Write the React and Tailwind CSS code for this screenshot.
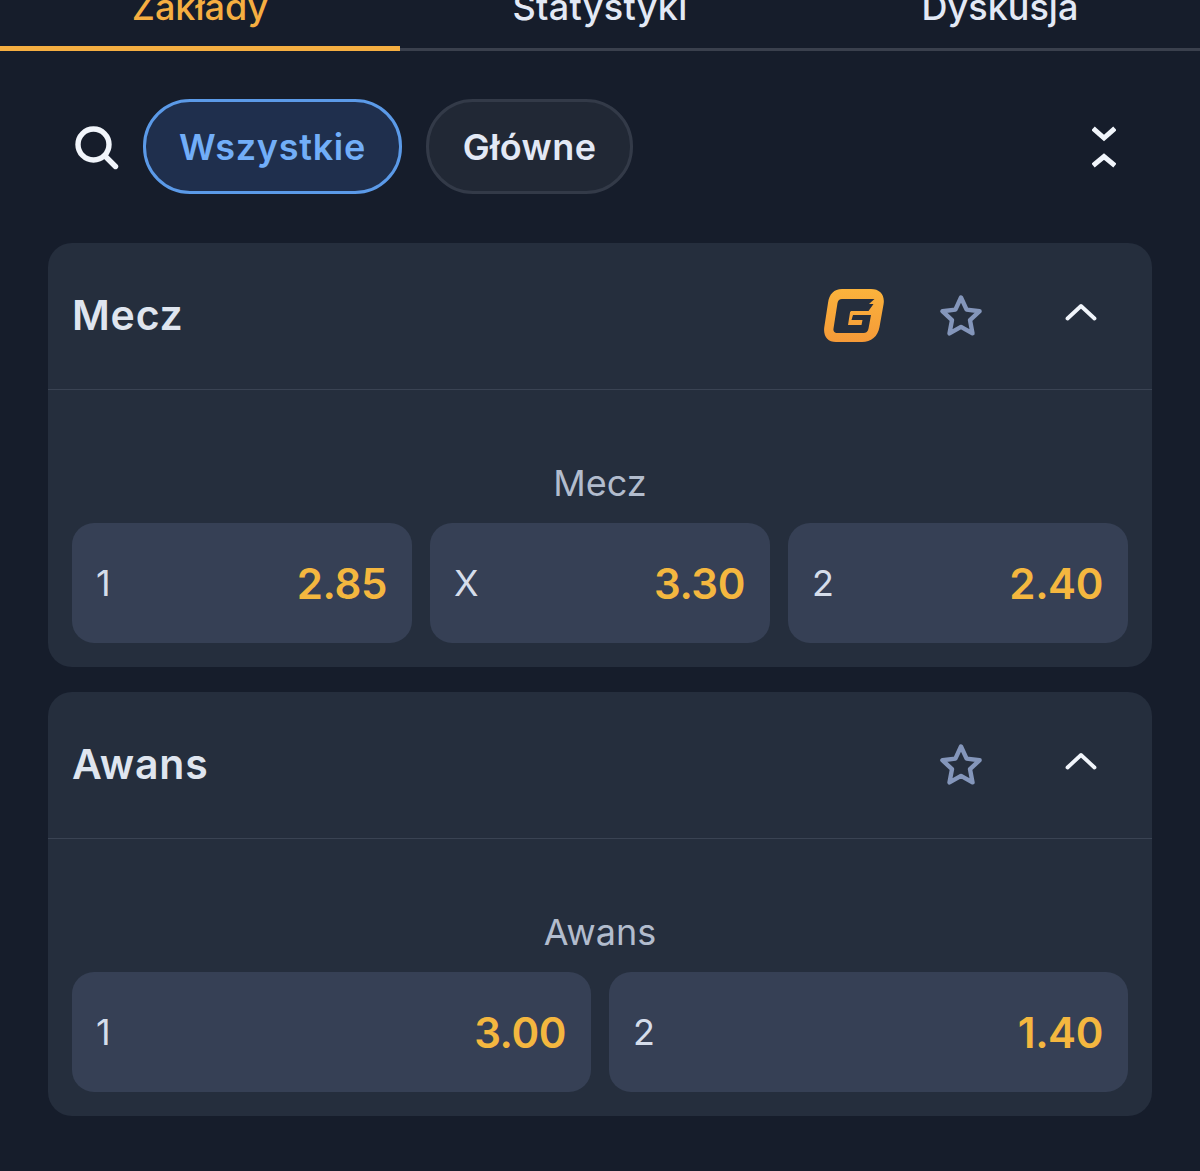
const font = { fontFamily: "Inter, 'Noto Sans', sans-serif" };

function GameLogo() {
  return (
    <svg width="60" height="53" viewBox="0 0 60 53" className="shrink-0">
      <defs>
        <linearGradient id="logoFill" x1="0" y1="0" x2="0" y2="1">
          <stop offset="0" stopColor="#fbb33c" />
          <stop offset="1" stopColor="#f59a38" />
        </linearGradient>
      </defs>
      <path
        d="M18 0H47C56 0 61 6 59.600 15L55.500 38C54 47.500 47 53 38 53H12C3.500 53 -1 47 0.300 38L4 14C5.300 5 10 0 18 0Z"
        fill="url(#logoFill)"
      />
      <path
        d="M18 10H50.500L45 15H49.500L44.500 22H28C26.800 22 26.200 22.500 26 23.500L24 36H37.500L38.500 31H27.500L29 26H47L44.500 39.500C44 42.500 42 44 39.500 44H13.500C10.500 44 9 42 9.500 39.500L13.500 14C14 11.500 15.500 10 18 10Z"
        fill="#252e3d"
      />
    </svg>
  );
}

function Star() {
  return (
    <svg width="44" height="44" viewBox="0 0 44 44" fill="none" className="shrink-0">
      <path
        d="M22 3.500L27.600 15.600L40.600 17.200L31 26.200L33.500 39.400L22 32.900L10.500 39.400L13 26.200L3.400 17.200L16.400 15.600Z"
        stroke="#8496bb"
        strokeWidth="4.400"
        strokeLinejoin="round"
      />
    </svg>
  );
}

function ChevronUp() {
  return (
    <svg width="32" height="20" viewBox="0 0 32 20" fill="none" className="shrink-0">
      <path d="M2.500 16.500L16 4L29.500 16.500" stroke="#f1f5fb" strokeWidth="3.800" strokeLinecap="round" strokeLinejoin="round" />
    </svg>
  );
}

function Odd({ label, value }) {
  return (
    <div className="flex-1 h-[120px] rounded-[22px] bg-[#364055] flex items-center justify-between pl-6 pr-[25px]">
      <span className="text-[36px] text-[#d5ddea]">{label}</span>
      <span className="text-[42px] font-semibold text-[#f4b73f] tracking-[-0.4px]">{value}</span>
    </div>
  );
}

function Market({ title, odds, hot }) {
  return (
    <section className="rounded-[24px] bg-[#252e3d] h-[424px] flex flex-col">
      <div className="h-[147px] shrink-0 border-b border-[#3a4353] flex items-center pl-6 pr-[55px]">
        <h2 className="text-[41px] font-semibold tracking-[0.8px] text-[#dfe5ef] flex-1">{title}</h2>
        {hot && (
          <div className="mr-[55px] mt-[-2px]">
            <GameLogo />
          </div>
        )}
        <div className="mr-[82px]">
          <Star />
        </div>
        <div className="mb-2">
          <ChevronUp />
        </div>
      </div>
      <div className="text-center text-[36px] leading-[44px] text-[#b2bccd] mt-[71px] mb-[18px]">{title}</div>
      <div className="flex gap-[18px] px-6">
        {odds.map((o) => (
          <Odd key={o.label} label={o.label} value={o.value} />
        ))}
      </div>
    </section>
  );
}

export default function App() {
  return (
    <div style={font} className="w-[1200px] h-[1171px] overflow-hidden bg-[#161d2b]">
      <nav className="h-[51px] flex relative">
        <div className="flex-1 h-[51px] border-b-[5px] border-[#f5ae41] flex justify-center">
          <span className="text-[36px] leading-[40px] font-medium text-[#f5ae41] mt-[-13px]">Zakłady</span>
        </div>
        <div className="flex-1 h-[51px] border-b-[3px] border-[#3a404d] flex justify-center">
          <span className="text-[36px] leading-[40px] font-medium tracking-[0.3px] text-[#e3e9f5] mt-[-13px]">Statystyki</span>
        </div>
        <div className="flex-1 h-[51px] border-b-[3px] border-[#3a404d] flex justify-center">
          <span className="text-[36px] leading-[40px] font-medium text-[#e3e9f5] mt-[-13px]">Dyskusja</span>
        </div>
      </nav>

      <div className="flex items-center h-[95px] mt-[48px] pl-[75px] pr-[84px]">
        <svg width="44" height="44" viewBox="0 0 44 44" fill="none" className="shrink-0 mr-[24px] mt-[2px]">
          <circle cx="18.500" cy="18.500" r="15.500" stroke="#f1f5fb" strokeWidth="5.400" />
          <path d="M30 30L40.500 40.500" stroke="#f1f5fb" strokeWidth="5.400" strokeLinecap="round" />
        </svg>
        <button className="h-[95px] w-[259px] rounded-[47px] border-[3px] border-[#5b9ae8] bg-[#1f2f4d] text-[36px] font-semibold tracking-[0.7px] text-[#72aef8]">
          Wszystkie
        </button>
        <button className="h-[95px] w-[207px] ml-[24px] rounded-[47px] border-[3px] border-[#333a48] bg-[#212835] text-[36px] font-semibold tracking-[0.4px] text-[#e3e9f5]">
          Główne
        </button>
        <svg width="24" height="42" viewBox="0 0 24 42" fill="none" className="ml-auto shrink-0">
          <path d="M3 4L12 12L21 4" stroke="#f1f5fb" strokeWidth="5" strokeLinecap="square" />
          <path d="M3 38L12 30.500L21 38" stroke="#f1f5fb" strokeWidth="5" strokeLinecap="square" />
        </svg>
      </div>

      <div className="mt-[49px] mx-12 flex flex-col gap-[25px]">
        <Market
          title="Mecz"
          hot
          odds={[
            { label: "1", value: "2.85" },
            { label: "X", value: "3.30" },
            { label: "2", value: "2.40" },
          ]}
        />
        <Market
          title="Awans"
          odds={[
            { label: "1", value: "3.00" },
            { label: "2", value: "1.40" },
          ]}
        />
      </div>
    </div>
  );
}
